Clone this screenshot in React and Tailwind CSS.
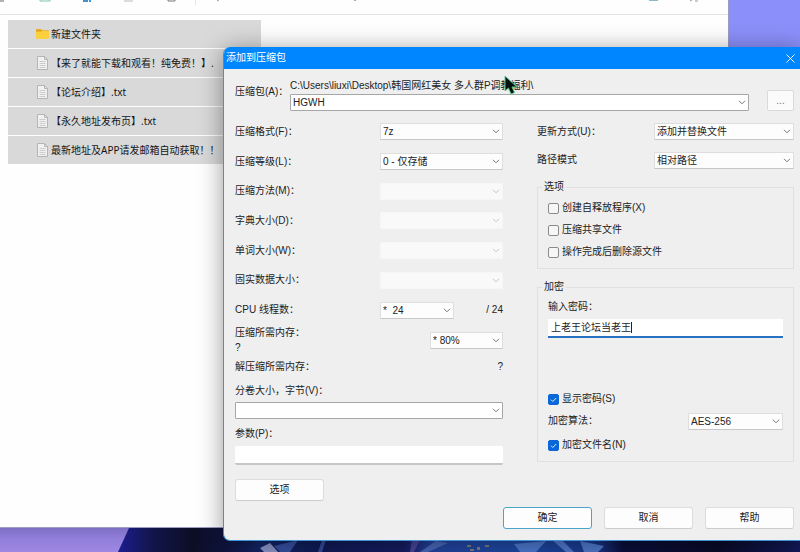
import React from "react";

const FILES = [
  { name: "新建文件夹", folder: true },
  { name: "【来了就能下载和观看！纯免费！】." },
  { name: "【论坛介绍】.txt" },
  { name: "【永久地址发布页】.txt" },
  { name: "最新地址及APP请发邮箱自动获取！！" },
];

const LEFT_ROWS = [
  { id: "format", label: "压缩格式(F)：", value: "7z" },
  { id: "level", label: "压缩等级(L)：", value: "0 - 仅存储" },
  { id: "method", label: "压缩方法(M)：", value: "", disabled: true },
  { id: "dict", label: "字典大小(D)：", value: "", disabled: true },
  { id: "word", label: "单词大小(W)：", value: "", disabled: true },
  { id: "solid", label: "固实数据大小：", value: "", disabled: true },
];

function FolderIcon() {
  return (
    <svg className="h-3 w-[13px] shrink-0" viewBox="0 0 13 12" aria-hidden="true">
      <path d="M0 2.2Q0 1 1.2 1H4.6L6 2.3H11.8Q13 2.3 13 3.5V6H0Z" fill="#e9a91c" />
      <path d="M0 4.6Q0 3.8 .8 3.8H5L6.2 3H12.2Q13 3 13 3.8V9.8Q13 11 11.8 11H1.2Q0 11 0 9.8Z" fill="#fccf3f" />
    </svg>
  );
}

function FileIcon() {
  return (
    <svg className="h-[14px] w-[13px] shrink-0" viewBox="0 0 13 14" aria-hidden="true">
      <path d="M1.5 .5H8.5L11.5 3.5V13.5H1.5Z" fill="#f1f1f1" stroke="#b4b4b4" />
      <path d="M8.5 .5V3.5H11.5" fill="none" stroke="#b4b4b4" />
      <path d="M3.5 5.5H9.5M3.5 7.5H9.5M3.5 9.5H9.5M3.5 11.5H9.5" stroke="#cccccc" />
    </svg>
  );
}

function Select({ id, value, className = "", framed = false, disabled = false }) {
  const look = framed
    ? "border-[#a6a6a6] bg-white"
    : disabled
      ? "border-[#f6f6f6] bg-[#f9f9f9]"
      : "border-[#dedede] border-b-[#c8c8c8] bg-[#fdfdfd]";
  return (
    <div className={`relative ${className}`}>
      <select
        id={id}
        disabled={disabled}
        defaultValue={value}
        className={`block h-[17px] w-full appearance-none rounded-[1px] border pr-4 pl-[2px] text-[10px] leading-[15px] text-[#222] opacity-100 outline-none ${look}`}
      >
        <option value={value}>{value}</option>
      </select>
      <svg
        className={`pointer-events-none absolute top-[6px] right-[3px] h-[5px] w-2 ${disabled ? "text-[#c4c4c4]" : "text-[#777]"}`}
        viewBox="0 0 8 5"
        fill="none"
        stroke="currentColor"
        aria-hidden="true"
      >
        <path d="M1 .8L4 3.8L7 .8" />
      </svg>
    </div>
  );
}

function Check({ id, label, checked = false }) {
  return (
    <label htmlFor={id} className="flex h-[22px] items-center gap-[3px]">
      <span className="relative flex">
        <input
          id={id}
          type="checkbox"
          defaultChecked={checked}
          className="peer block h-[11px] w-[11px] appearance-none rounded-[2px] border border-[#8a8a8a] bg-[#f6f6f6] checked:border-[#0a67d8] checked:bg-[#0a67d8]"
        />
        <svg
          className="pointer-events-none absolute inset-0 hidden h-[11px] w-[11px] peer-checked:block"
          viewBox="0 0 11 11"
          fill="none"
          stroke="#d9eaff"
          aria-hidden="true"
        >
          <path d="M3 5.7L4.8 7.5L8.2 4" />
        </svg>
      </span>
      {label}
    </label>
  );
}

function Button({ children, primary = false }) {
  return (
    <button
      type="button"
      className={`h-[22px] w-[89px] rounded-[3px] border bg-[#fdfdfd] leading-[18px] ${primary ? "border-[#4ba3c9]" : "border-[#dcdcdc] border-b-[#cccccc]"}`}
    >
      {children}
    </button>
  );
}

function Wallpaper() {
  return (
    <svg className="absolute inset-0 h-full w-full" viewBox="0 0 800 552" preserveAspectRatio="none" aria-hidden="true">
      <defs>
        <linearGradient id="lilac" x1="0" y1="0" x2="0" y2="1">
          <stop offset="0" stopColor="#7b6cc0" />
          <stop offset=".5" stopColor="#917fdb" />
          <stop offset="1" stopColor="#9d87e2" />
        </linearGradient>
        <linearGradient id="night" x1="118" x2="800" y1="0" y2="0" gradientUnits="userSpaceOnUse">
          <stop offset="0" stopColor="#1d1d8f" />
          <stop offset=".05" stopColor="#11154b" />
          <stop offset=".11" stopColor="#0c0e25" />
          <stop offset=".16" stopColor="#0f1440" />
          <stop offset=".21" stopColor="#122669" />
          <stop offset=".3" stopColor="#101a55" />
          <stop offset=".42" stopColor="#161c62" />
          <stop offset=".46" stopColor="#2444a0" />
          <stop offset=".6" stopColor="#1d49a4" />
          <stop offset=".7" stopColor="#1b378c" />
          <stop offset=".74" stopColor="#0a0f3c" />
          <stop offset=".88" stopColor="#090b28" />
          <stop offset="1" stopColor="#12195a" />
        </linearGradient>
      </defs>
      <path d="M0 0H800V552H0Z" fill="#8b8ffa" />
      <path d="M0 526H140V552H0Z" fill="url(#lilac)" />
      <path d="M129 528H800V552H118Z" fill="url(#night)" />
      <path d="M260 548L270 543L278 552H264Z" fill="#8e95c9" />
      <path d="M274 546L298 540L290 552H280Z" fill="#3550a0" />
      <path d="M322 540L318 552H322L326 540Z" fill="#34489a" />
      <path d="M412 540L410 552H414L420 540Z" fill="#4a459a" />
      <path d="M436 541L420 552H428L448 543Z" fill="#4a68ba" />
      <path d="M514 544L546 541L536 552H520Z" fill="#4c78cf" />
      <path d="M552 540L566 552H574L562 540ZM580 541L604 546L598 552H584Z" fill="#5078cc" />
      <path d="M467 545h4v2h-4zM470 549h4v2h-4zM477 547h3v3h-3zM485 545h4v2h-4z" fill="#7f7c80" />
    </svg>
  );
}

function Explorer() {
  return (
    <main className="absolute top-0 right-[71px] bottom-6 left-0 overflow-hidden border-r border-b border-[#9c9cc4] bg-[#fefefe]">
      <div className="flex h-[15px] items-start border-b border-[#e3e3e3]">
        <svg className="h-[5px] w-[730px] shrink-0" viewBox="0 0 730 5" fill="none" aria-hidden="true">
          <path d="M0 1H4" stroke="#666" />
          <path d="M40 0V1H50V0" stroke="#7cc5b6" />
          <path d="M83 1H88M90 0V2" stroke="#3b93d6" strokeWidth="2" />
          <path d="M124 1H133" stroke="#bbb" />
          <path d="M168 0V1H175V0" stroke="#777" />
          <path d="M195.500 0V5" stroke="#e6e6e6" />
          <path d="M217 0L219 1" stroke="#999" />
          <path d="M354 .5H356" stroke="#aaa" />
          <path d="M649 0H658" stroke="#8bb8cc" strokeWidth="2" />
          <path d="M690 1L692 0M695 1H698" stroke="#999" />
        </svg>
      </div>
      <ul className="mt-[5px] ml-2 flex w-[253px] flex-col gap-px font-['Noto_Sans','Noto_Sans_CJK_SC',sans-serif] text-[10px] text-[#151515]">
        {FILES.map((file) => (
          <li key={file.name} className="flex h-7 items-center gap-[2px] overflow-hidden bg-[#d9d9d9] pl-7 whitespace-nowrap">
            {file.folder ? <FolderIcon /> : <FileIcon />}
            {file.name}
          </li>
        ))}
      </ul>
    </main>
  );
}

function Dialog() {
  return (
    <section
      role="dialog"
      aria-labelledby="dialog-title"
      className="absolute top-[47px] right-0 left-[223px] overflow-hidden rounded-l-[7px] border-b border-l border-[#3f93d4] bg-[#efefef] shadow-[0_3px_24px_rgba(0,0,0,0.4)]"
    >
      <header className="flex h-[22px] items-center justify-between bg-[#0086ff] pr-[5px] pl-[2px] text-white">
        <h1 id="dialog-title">添加到压缩包</h1>
        <button type="button" aria-label="关闭">
          <svg className="h-[9px] w-[9px]" viewBox="0 0 9 9" stroke="currentColor" aria-hidden="true">
            <path d="M.5 .5L8.500 8.500M8.500 .5L.5 8.500" />
          </svg>
        </button>
      </header>

      <form className="pt-[9px] pr-[6px] pb-[11px] pl-[11px]">
        <div className="flex items-end">
          <label htmlFor="archive" className="mb-[11px] w-[55px] leading-4">压缩包(A)：</label>
          <div className="min-w-0 flex-1">
            <p className="leading-4 whitespace-nowrap">C:\Users\liuxi\Desktop\韩国网红美女 多人群P调教福利\</p>
            <Select id="archive" value="HGWH" framed />
          </div>
          <button type="button" className="ml-[18px] h-[21px] w-[27px] rounded-[2px] border border-[#dadada] bg-[#fbfbfb] leading-[18px] text-[#777]">
            ...
          </button>
        </div>

        <div className="mt-[6px] grid grid-cols-[268px_minmax(0,1fr)] gap-x-[34px]">
          <div>
            <div className="grid h-[208px] grid-rows-7 items-center">
              {LEFT_ROWS.map((row) => (
                <div key={row.id} className="flex items-center justify-between">
                  <label htmlFor={row.id}>{row.label}</label>
                  <Select id={row.id} value={row.value} disabled={row.disabled} className="w-[123px]" />
                </div>
              ))}
              <div className="flex items-center">
                <label htmlFor="threads" className="flex-1">CPU 线程数：</label>
                <Select id="threads" value={"*\u00a0\u00a024"} className="w-[74px]" />
                <span className="w-[49px] text-right">/ 24</span>
              </div>
            </div>

            <div className="flex items-center justify-between">
              <label htmlFor="memory" className="leading-[15px]">
                压缩所需内存：
                <br />?
              </label>
              <Select id="memory" value="* 80%" className="w-[73px]" />
            </div>
            <div className="mt-[2px] flex h-5 items-center justify-between">
              <span>解压缩所需内存：</span>
              <span>?</span>
            </div>
            <label htmlFor="volume" className="mt-1 block leading-5">分卷大小，字节(V)：</label>
            <Select id="volume" value="" framed className="mt-px" />
            <label htmlFor="params" className="mt-[5px] block leading-5">参数(P)：</label>
            <input id="params" type="text" className="mt-[2px] block h-[19px] w-full rounded-[2px] border-b-2 border-[#c6c6c6] bg-white px-1 outline-none" />
            <div className="mt-[14px]">
              <Button>选项</Button>
            </div>
          </div>

          <div>
            <div className="flex h-[29px] items-center justify-between">
              <label htmlFor="update">更新方式(U)：</label>
              <Select id="update" value="添加并替换文件" className="w-[140px]" />
            </div>
            <div className="flex h-7 items-center justify-between">
              <label htmlFor="path-mode">路径模式</label>
              <Select id="path-mode" value="相对路径" className="w-[140px]" />
            </div>

            <fieldset className="mt-[6px] border border-[#e0e0e0] px-[10px] pb-[5px]">
              <legend className="-ml-[6px] px-[2px] leading-[14px]">选项</legend>
              <div className="pt-[3px]">
                <Check id="sfx" label="创建自释放程序(X)" />
                <Check id="shared" label="压缩共享文件" />
                <Check id="delete" label="操作完成后删除源文件" />
              </div>
            </fieldset>

            <fieldset className="mt-[11px] border border-[#e0e0e0] px-[10px] pb-[5px]">
              <legend className="-ml-[6px] px-[2px] leading-[14px]">加密</legend>
              <label htmlFor="password" className="mt-[3px] block leading-5">输入密码：</label>
              <div className="mt-[2px] flex h-[19px] items-center border-b-2 border-[#2672c0] bg-white pl-[3px]">
                <input
                  id="password"
                  type="text"
                  defaultValue="上老王论坛当老王"
                  className="block h-[15px] w-[80px] bg-transparent outline-none"
                />
                <span className="h-[11px] w-px bg-[#222]" aria-hidden="true" />
              </div>
              <div className="mt-[50px]">
                <Check id="show-password" label="显示密码(S)" checked />
              </div>
              <div className="flex h-[22px] items-center justify-between">
                <label htmlFor="cipher">加密算法：</label>
                <Select id="cipher" value="AES-256" className="w-[95px]" />
              </div>
              <div className="pt-[2px]">
                <Check id="encrypt-names" label="加密文件名(N)" checked />
              </div>
            </fieldset>
          </div>
        </div>

        <div className="mt-[6px] flex justify-end gap-3">
          <Button primary>确定</Button>
          <Button>取消</Button>
          <Button>帮助</Button>
        </div>
      </form>
    </section>
  );
}

export default function App() {
  return (
    <div className="relative h-screen w-full overflow-hidden font-['Liberation_Sans','Noto_Sans_CJK_SC',sans-serif] text-[10px] leading-4 text-[#222]">
      <Wallpaper />
      <Explorer />
      <Dialog />
      <svg className="pointer-events-none absolute top-[74px] left-[503px] h-[22px] w-[15px]" viewBox="0 0 15 22" aria-hidden="true">
        <path d="M2 2V17L5.500 14L8 20L11.500 18.500L9 13H14Z" fill="#04120c" stroke="#55c795" strokeWidth="1" />
      </svg>
    </div>
  );
}
